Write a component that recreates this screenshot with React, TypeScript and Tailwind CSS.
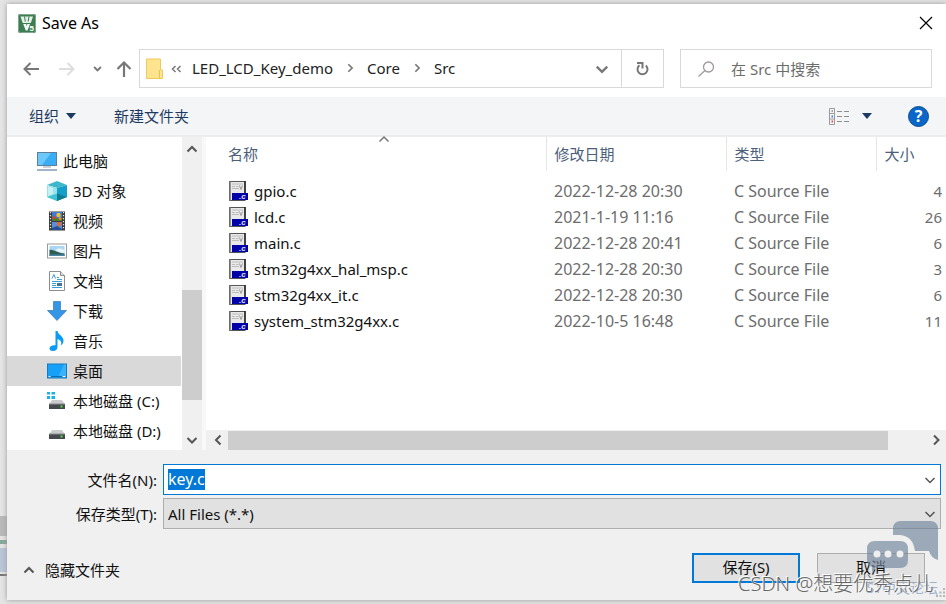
import { useEffect, useRef, type ReactNode } from 'react';

type Direction = 'up' | 'down' | 'left' | 'right';

const chevronPaths: Record<Direction, string> = {
  up: 'M1.5 8.5 6 4l4.500 4.500',
  down: 'M1.500 4 6 8.500 10.500 4',
  left: 'M8.500 1.500 4 6l4.500 4.500',
  right: 'M4 1.500 8.500 6 4 10.500',
};

function Chevron({ dir, size = 12, color = '#555', weight = 2 }: { dir: Direction; size?: number; color?: string; weight?: number }) {
  return (
    <svg width={size} height={size} viewBox="0 0 12 12" fill="none" stroke={color} strokeWidth={weight} aria-hidden="true">
      <path d={chevronPaths[dir]} />
    </svg>
  );
}

function AppIcon() {
  return (
    <svg width="18" height="19" viewBox="0 0 18 19" aria-hidden="true">
      <rect width="18" height="19" rx="2" fill="#3c7d52" />
      <rect x="0.500" y="0.500" width="17" height="18" rx="2" fill="none" stroke="#7fa88c" />
      <path d="M2.500 2.500h12.500L12.800 9H4.700z" fill="#e6f0e8" />
      <path d="M6.500 2.500l.8 5M11 2.500l-.8 5" stroke="#3c7d52" />
      <path d="M5.200 10h6.800L9.500 16.500H7.800z" fill="#f6faf7" />
      <path d="M8 9h1.500l-.7 3.500z" fill="#3c7d52" />
      <text x="11.500" y="16.500" fontSize="8" fontWeight="700" fill="#fff" fontFamily="Liberation Sans, sans-serif">5</text>
    </svg>
  );
}

function FolderIcon() {
  return (
    <svg width="17" height="21" viewBox="0 0 17 21" aria-hidden="true">
      <path d="M.5 1h14v11l2 0v8.500H.500z" fill="#ffe48f" stroke="#f0cb5c" />
      <path d="M13.500 12v8" stroke="#edc24c" />
    </svg>
  );
}

function PcIcon() {
  return (
    <svg width="20" height="20" viewBox="0 0 20 20" aria-hidden="true">
      <rect x="0.500" y="1.500" width="19" height="13" fill="#39aef5" stroke="#5c7f9c" />
      <path d="M1 2h13L5 14H1z" fill="#6cc7fb" />
      <path d="M6 16h8" stroke="#8fa5b5" />
      <path d="M0 19h20" stroke="#a3b5c4" strokeWidth="2" />
    </svg>
  );
}

function CubeIcon() {
  return (
    <svg width="20" height="20" viewBox="0 0 20 20" aria-hidden="true">
      <path d="M0 4 10 0l10 4-10 3z" fill="#3fb7cb" />
      <path d="M0 4l10 3v13L0 16z" fill="#9be3ea" />
      <path d="M20 4 10 7v13l10-4z" fill="#149fc9" />
      <path d="M0 16l10-3.500V20z" fill="#3fc3d2" />
      <path d="M10 12.500 20 16l-10 4z" fill="#0c7d94" />
      <path d="M1 5l5 2v6l-5 2z" fill="#c4f1f4" />
    </svg>
  );
}

function VideoIcon() {
  return (
    <svg width="20" height="20" viewBox="0 0 20 20" aria-hidden="true">
      <rect x="2" y="0.500" width="16" height="19" fill="#3a3a3a" />
      <rect x="5" y="1" width="10" height="9" fill="#3f7ad6" />
      <rect x="5" y="11" width="10" height="8" fill="#5b8ee0" />
      <path d="M5 7h10v3H5z" fill="#4d7f32" />
      <circle cx="11.500" cy="4" r="2.200" fill="#f1c232" />
      <circle cx="7" cy="6.500" r="1.600" fill="#d93f2b" />
      <circle cx="13" cy="7.500" r="1.500" fill="#e88a2c" />
      <path d="M10 11h4v3l-2 2-2-2z" fill="#e06a2a" />
      <path d="M5 17l5-2 5 3v1H5z" fill="#274f93" />
      <path d="M3.500 1v18M16.500 1v18" stroke="#e8e8e8" strokeWidth="1.200" strokeDasharray="1.200 1.800" />
    </svg>
  );
}

function PictureIcon() {
  return (
    <svg width="20" height="20" viewBox="0 0 20 20" aria-hidden="true">
      <rect x="0.500" y="3" width="19" height="14" fill="#fff" stroke="#9a9a9a" />
      <rect x="2.500" y="5" width="15" height="10" fill="#a9d6f3" />
      <path d="M2.500 9c4-1 7 3 15 3.500V15h-15z" fill="#2f5c50" />
      <path d="M2.500 13.500h15V15h-15z" fill="#4a86a8" />
      <path d="M10 8c3-1 5 0 7.500 1v3c-3 0-6-1-9-3z" fill="#eaf5fb" />
    </svg>
  );
}

function DocumentIcon() {
  return (
    <svg width="20" height="20" viewBox="0 0 20 20" aria-hidden="true">
      <path d="M2.500.500h11l4 4v15h-15z" fill="#fff" stroke="#8e8e8e" />
      <path d="M13.500.500v4h4" fill="#ddd" stroke="#8e8e8e" />
      <path d="M5 7.500 7 3.500l1.500 4M10 6.500h2M10 8.500h5M5 10.500h10M5 12.500h4M5 14.500h4M5 16.500h10" stroke="#3b9dd8" fill="none" />
      <rect x="10" y="12" width="5" height="3" fill="#47739a" />
    </svg>
  );
}

function DownloadIcon() {
  return (
    <svg width="20" height="20" viewBox="0 0 20 20" aria-hidden="true">
      <path d="M6.500.500h7v9h6L10 19.500.500 9.500h6z" fill="#3596e6" stroke="#3d83c2" strokeWidth="0.800" />
    </svg>
  );
}

function MusicIcon() {
  return (
    <svg width="20" height="20" viewBox="0 0 20 20" aria-hidden="true">
      <path d="M8.500 0h2c.5 4 6 5 6 9.500 0 2-1 4-2.500 5 1-4-.5-5.500-3.500-6.500v8c0 2.500-2 4-4.500 4s-3.500-1-3.500-2.700c0-2 2.500-3.500 6-3z" fill="#0a9bf2" />
    </svg>
  );
}

function DesktopIcon() {
  return (
    <svg width="20" height="20" viewBox="0 0 20 20" aria-hidden="true">
      <rect x="0.500" y="3" width="19" height="14" fill="#16a0f7" stroke="#147cc0" />
      <path d="M11 16 17 3.500h2V16z" fill="#3cb2fa" />
      <path d="M1 15.500h18" stroke="#0c6fb5" />
      <path d="M1.500 15.500h2M15.500 15.500h3" stroke="#fff" />
    </svg>
  );
}

function DriveIcon({ system = false }: { system?: boolean }) {
  return (
    <svg width="20" height="20" viewBox="0 0 20 20" aria-hidden="true">
      <path d="M5 9h10l3 4.500H2z" fill="#c9cbcc" />
      <rect x="2" y="13" width="16" height="5" fill="#45494b" />
      <path d="M2 13h16" stroke="#8a8d8f" />
      <rect x="13.500" y="14.500" width="2" height="2" fill="#4fe04a" />
      {system && (
        <g>
          <rect width="9" height="9" fill="#fff" />
          <path d="M0 1h3v2.500H0zM4.500 1H8v2.500H4.500zM0 5h3v3H0zM4.500 5H8v3H4.500z" fill="#18b4e8" />
        </g>
      )}
    </svg>
  );
}

function SourceFileIcon() {
  return (
    <svg width="20" height="20" viewBox="0 0 20 20" aria-hidden="true">
      <rect x="1.500" y="0.500" width="15.500" height="19" fill="#e9e9e9" stroke="#555" />
      <path d="M2 0v20" stroke="#777" strokeWidth="1.500" />
      <path d="M17 0v12" stroke="#222" strokeWidth="1.500" />
      <path d="M4 3h11M4 5.500h3M8 5.500h2.500M4 7.500h7" stroke="#bcbcbc" />
      <path d="M11.500 4.500 13 8.500l1.500-4" stroke="#999" fill="none" />
      <path d="M4 12h16v7H4z" fill="#0000a8" />
      <text x="11" y="18" fontSize="8" fontStyle="italic" fontWeight="700" fill="#dfe0ff" fontFamily="Liberation Sans, sans-serif">.c</text>
    </svg>
  );
}

function ViewIcon() {
  return (
    <svg width="21" height="17" viewBox="0 0 21 17" fill="none" aria-hidden="true">
      <path d="M.500.500h5v16h-5zM.500 5.500h5M.500 11h5" stroke="#9b9b9b" />
      <path d="M2.500 3h1.500" stroke="#555" />
      <path d="M2.500 8.500h1.500" stroke="#2d7ff0" strokeWidth="2" />
      <path d="M2.500 13.500h1.500" stroke="#e04848" strokeWidth="2" />
      <path d="M8 3.500h5M15 3.500h5M8 8.500h5M15 8.500h5M8 13.500h5M15 13.500h5" stroke="#8d8d8d" />
    </svg>
  );
}

function Triangle() {
  return (
    <svg width="10" height="6" viewBox="0 0 10 6" aria-hidden="true">
      <path d="M0 0h10L5 6z" fill="#1e3a62" />
    </svg>
  );
}

const places: { name: string; icon: ReactNode; root?: boolean; selected?: boolean }[] = [
  { name: '此电脑', icon: <PcIcon />, root: true },
  { name: '3D 对象', icon: <CubeIcon /> },
  { name: '视频', icon: <VideoIcon /> },
  { name: '图片', icon: <PictureIcon /> },
  { name: '文档', icon: <DocumentIcon /> },
  { name: '下载', icon: <DownloadIcon /> },
  { name: '音乐', icon: <MusicIcon /> },
  { name: '桌面', icon: <DesktopIcon />, selected: true },
  { name: '本地磁盘 (C:)', icon: <DriveIcon system /> },
  { name: '本地磁盘 (D:)', icon: <DriveIcon /> },
];

const files = [
  { name: 'gpio.c', date: '2022-12-28 20:30', size: 4 },
  { name: 'lcd.c', date: '2021-1-19 11:16', size: 26 },
  { name: 'main.c', date: '2022-12-28 20:41', size: 6 },
  { name: 'stm32g4xx_hal_msp.c', date: '2022-12-28 20:30', size: 3 },
  { name: 'stm32g4xx_it.c', date: '2022-12-28 20:30', size: 6 },
  { name: 'system_stm32g4xx.c', date: '2022-10-5 16:48', size: 11 },
];

function TitleBar() {
  return (
    <header className="flex h-[38px] items-center pr-3 pl-[11px] text-black">
      <AppIcon />
      <h1 className="ml-1.5 flex-1 text-base leading-5">Save As</h1>
      <button type="button" aria-label="关闭" className="flex size-4 items-center justify-center">
        <svg width="14" height="14" viewBox="0 0 14 14" stroke="#000" strokeWidth="1.200" aria-hidden="true">
          <path d="M1 1l12 12M13 1 1 13" />
        </svg>
      </button>
    </header>
  );
}

function Navigation() {
  return (
    <nav className="flex h-[55px] items-start pt-[7px] pr-3.5 pl-4">
      <div className="flex h-[39px] w-[116px] shrink-0 items-center">
        <button type="button" aria-label="后退">
          <svg width="16" height="14" viewBox="0 0 16 14" fill="none" stroke="#777" strokeWidth="2" aria-hidden="true">
            <path d="M16 7H1.500M7.500 1l-6 6 6 6" />
          </svg>
        </button>
        <button type="button" aria-label="前进" className="ml-5">
          <svg width="16" height="14" viewBox="0 0 16 14" fill="none" stroke="#dedede" strokeWidth="2" aria-hidden="true">
            <path d="M0 7h14.500M8.500 1l6 6-6 6" />
          </svg>
        </button>
        <button type="button" aria-label="最近位置" className="ml-[18px]">
          <Chevron dir="down" size={9} color="#777" weight={2.5} />
        </button>
        <button type="button" aria-label="上移" className="ml-3.5">
          <svg width="16" height="16" viewBox="0 0 16 16" fill="none" stroke="#777" strokeWidth="2.200" aria-hidden="true">
            <path d="M8 16V1.500M1.500 8 8 1.500 14.500 8" />
          </svg>
        </button>
      </div>
      <div className="flex h-[39px] flex-1 items-center border border-[#d9d9d9] pl-1.5 text-[#222]">
        <FolderIcon />
        <svg className="ml-2" width="11" height="8" viewBox="0 0 11 8" fill="none" stroke="#777" strokeWidth="1.500" aria-hidden="true">
          <path d="M4.500 1 1.500 4l3 3M9.500 1l-3 3 3 3" />
        </svg>
        <ol className="ml-2.5 flex flex-1 items-center gap-3 pb-0.5">
          <li><button type="button">LED_LCD_Key_demo</button></li>
          <li><Chevron dir="right" size={10} color="#777" /></li>
          <li><button type="button">Core</button></li>
          <li><Chevron dir="right" size={10} color="#777" /></li>
          <li><button type="button">Src</button></li>
        </ol>
        <button type="button" aria-label="以前的位置" className="mr-3">
          <Chevron dir="down" size={14} color="#777" />
        </button>
        <button type="button" aria-label="刷新" className="flex h-full w-[42px] items-center justify-center border-l border-[#d9d9d9]">
          <svg width="13" height="15" viewBox="0 0 13 15" fill="none" stroke="#777" strokeWidth="2" aria-hidden="true">
            <path d="M9.800 4.500A5 5 0 1 1 3.500 4.300M1 2h5.500v5.500" />
          </svg>
        </button>
      </div>
      <label className="ml-4 flex h-[39px] w-[252px] items-center border border-[#d9d9d9] pl-[17px]">
        <svg width="17" height="16" viewBox="0 0 17 16" fill="none" stroke="#a09a9a" strokeWidth="1.300" aria-hidden="true">
          <circle cx="10.500" cy="6" r="5" />
          <path d="M7 9.500.500 15.500" />
        </svg>
        <input type="search" aria-label="搜索" placeholder="在 Src 中搜索" className="ml-4 min-w-0 flex-1 bg-transparent outline-none placeholder:text-[#6d6d6d]" />
      </label>
    </nav>
  );
}

function Toolbar() {
  return (
    <div role="toolbar" className="flex h-10 items-center border-b-2 border-[#ededed] bg-[#f4f5f7] pr-[17px] pl-[22px] text-[#1e3a62]">
      <button type="button" className="flex items-center gap-[7px]">组织 <Triangle /></button>
      <button type="button" className="ml-[38px]">新建文件夹</button>
      <button type="button" aria-label="视图" className="ml-auto flex items-center gap-3">
        <ViewIcon />
        <Triangle />
      </button>
      <button type="button" aria-label="帮助" className="ml-9 flex size-[21px] items-center justify-center rounded-full border border-[#0a4a8c] bg-[#0a66c8] text-base leading-5 font-bold text-white">
        ?
      </button>
    </div>
  );
}

function Sidebar() {
  return (
    <div className="flex w-[199px] shrink-0 border-r-4 border-[#f8f8f8]">
      <ul className="flex-1 pt-[9px] text-[#111]">
        {places.map((place) => (
          <li key={place.name} className={place.selected ? 'bg-[#d9d9d9]' : ''}>
            <button type="button" className={`flex h-[30px] w-full items-center gap-1.5 ${place.root ? 'pl-[30px]' : 'pl-10'}`}>
              {place.icon}
              {place.name}
            </button>
          </li>
        ))}
      </ul>
      <div className="ml-px flex w-5 flex-col items-center bg-[#f0f0f0] pt-1.5 pb-1">
        <Chevron dir="up" />
        <div className="flex-1" />
        <div className="h-[110px] w-full bg-[#cdcdcd]" />
        <div className="h-[34px]" />
        <Chevron dir="down" />
      </div>
    </div>
  );
}

function FileList() {
  return (
    <div className="flex min-w-0 flex-1 flex-col">
      <div className="flex-1 pl-4">
        <table className="w-full table-fixed text-left">
          <colgroup>
            <col />
            <col className="w-[180px]" />
            <col className="w-[150px]" />
            <col className="w-[70px]" />
          </colgroup>
          <thead className="text-[#4c607a]">
            <tr className="h-[34px]">
              <th aria-sort="ascending" className="relative pl-1.5 font-normal">
                <span className="absolute inset-x-0 -top-1 flex justify-center">
                  <Chevron dir="up" color="#777" weight={1.5} />
                </span>
                名称
              </th>
              <th className="border-l border-[#e5e5e5] pl-2 font-normal">修改日期</th>
              <th className="border-l border-[#e5e5e5] pl-2 font-normal">类型</th>
              <th className="border-l border-[#e5e5e5] pl-2 font-normal">大小</th>
            </tr>
          </thead>
          <tbody className="text-[#6d6d6d] before:block before:h-[7px]">
            {files.map((file) => (
              <tr key={file.name} className="h-[26px]">
                <td className="pl-1.5 text-[#111]">
                  <span className="flex items-center gap-1.5">
                    <SourceFileIcon />
                    {file.name}
                  </span>
                </td>
                <td className="pl-2 text-base leading-5">{file.date}</td>
                <td className="pl-2 text-base leading-5">C Source File</td>
                <td className="pr-1 text-right">{file.size}</td>
              </tr>
            ))}
          </tbody>
        </table>
      </div>
      <div className="flex h-5 items-center bg-[#f0f0f0] pr-1 pl-1.5">
        <Chevron dir="left" />
        <div className="ml-1 h-[19px] w-[660px] min-w-0 shrink bg-[#cdcdcd]" />
        <div className="min-w-10 flex-1" />
        <Chevron dir="right" />
      </div>
    </div>
  );
}

function Footer() {
  const nameRef = useRef<HTMLInputElement>(null);

  useEffect(() => {
    nameRef.current?.focus();
    nameRef.current?.select();
  }, []);

  return (
    <form className="bg-[#f0f0f0] pt-3.5 text-[#111]" onSubmit={(event) => event.preventDefault()}>
      <div className="grid grid-cols-[150px_1fr] items-center gap-x-1.5 gap-y-[3px] pr-[5px]">
        <label htmlFor="file-name" className="text-right">文件名(N):</label>
        <div className="flex h-[31px] items-center border border-[#0078d7] bg-white px-1">
          <input id="file-name" ref={nameRef} defaultValue="key.c" className="h-[21px] min-w-0 flex-1 bg-transparent text-base leading-[21px] outline-none selection:bg-[#0078d7] selection:text-white" />
          <button type="button" aria-label="文件名列表">
            <Chevron dir="down" color="#555" weight={1.5} />
          </button>
        </div>
        <label htmlFor="file-type" className="text-right">保存类型(T):</label>
        <div className="relative">
          <select id="file-type" className="block h-[31px] w-full appearance-none border border-[#adadad] bg-[#e1e1e1] px-1 outline-none">
            <option>All Files (*.*)</option>
          </select>
          <span className="pointer-events-none absolute inset-y-0 right-[5px] flex items-center">
            <Chevron dir="down" color="#555" weight={1.5} />
          </span>
        </div>
      </div>
      <div className="flex items-center pt-6 pr-[21px] pb-[17px] pl-4">
        <button type="button" className="flex flex-1 items-center gap-2.5 pt-1">
          <Chevron dir="up" />
          隐藏文件夹
        </button>
        <button type="submit" className="h-[30px] w-[108px] border-2 border-[#0078d7] bg-[#e1e1e1] pb-0.5">保存(S)</button>
        <button type="button" className="ml-[17px] h-[30px] w-[108px] border border-[#adadad] bg-[#e1e1e1] pb-0.5">取消</button>
      </div>
    </form>
  );
}

function Watermark() {
  return (
    <div className="pointer-events-none absolute right-2 bottom-1.5 w-[200px]">
      <svg className="ml-auto" width="71" height="54" viewBox="0 0 71 54" aria-hidden="true">
        <path d="M26 9q0-8 8-8h29q8 0 8 8v31q-7-2-9-9H48q-2-15-15-16h-7z" fill="#6f829b" fillOpacity="0.650" />
        <path d="M8 21h25q8 0 8 8v11q0 8-8 8H9l-4 4v-5Q0 45 0 40V29q0-8 8-8z" fill="#6f829b" fillOpacity="0.650" />
        <circle cx="10" cy="34" r="3.500" fill="#efefef" />
        <circle cx="21" cy="34" r="3.500" fill="#efefef" />
        <circle cx="33" cy="34" r="3.500" fill="#efefef" />
      </svg>
      <p className="absolute right-0 bottom-0 text-sm leading-5 text-[#a3b2cb]">ST中文论坛</p>
      <p className="relative -mt-1 text-xl leading-7 font-light whitespace-nowrap text-[#666] [text-shadow:-1px_-1px_0_#fff]">CSDN @想要优秀点儿</p>
      <svg className="absolute -right-2 bottom-0" width="10" height="10" viewBox="0 0 10 10" fill="#b5b5b5" aria-hidden="true">
        <path d="M7 0h2v2H7zM3.500 3.500h2v2h-2zM7 3.500h2v2H7zM0 7h2v2H0zM3.500 7h2v2h-2zM7 7h2v2H7z" />
      </svg>
    </div>
  );
}

export default function App() {
  return (
    <div className="relative flex min-h-screen flex-col bg-[#e4e4e4] pt-1 pb-1 font-['Noto_Sans','Noto_Sans_CJK_SC',sans-serif] text-[15px] leading-5">
      <div className="flex flex-1">
        <div className="flex w-[7px] shrink-0 flex-col justify-end pb-6">
          <div className="h-5 bg-[#b9b9b9]" />
          <div className="mt-1 h-1 bg-[#86a89a]" />
          <div className="mt-1 h-6 bg-[#b9c6d6]" />
          <div className="mt-0.5 h-0.5 bg-[#777]" />
        </div>
        <main className="flex min-w-0 flex-1 flex-col bg-white shadow-[0_0_5px_#999]">
          <TitleBar />
          <Navigation />
          <Toolbar />
          <section className="flex flex-1">
            <Sidebar />
            <FileList />
          </section>
          <Footer />
        </main>
      </div>
      <Watermark />
    </div>
  );
}
